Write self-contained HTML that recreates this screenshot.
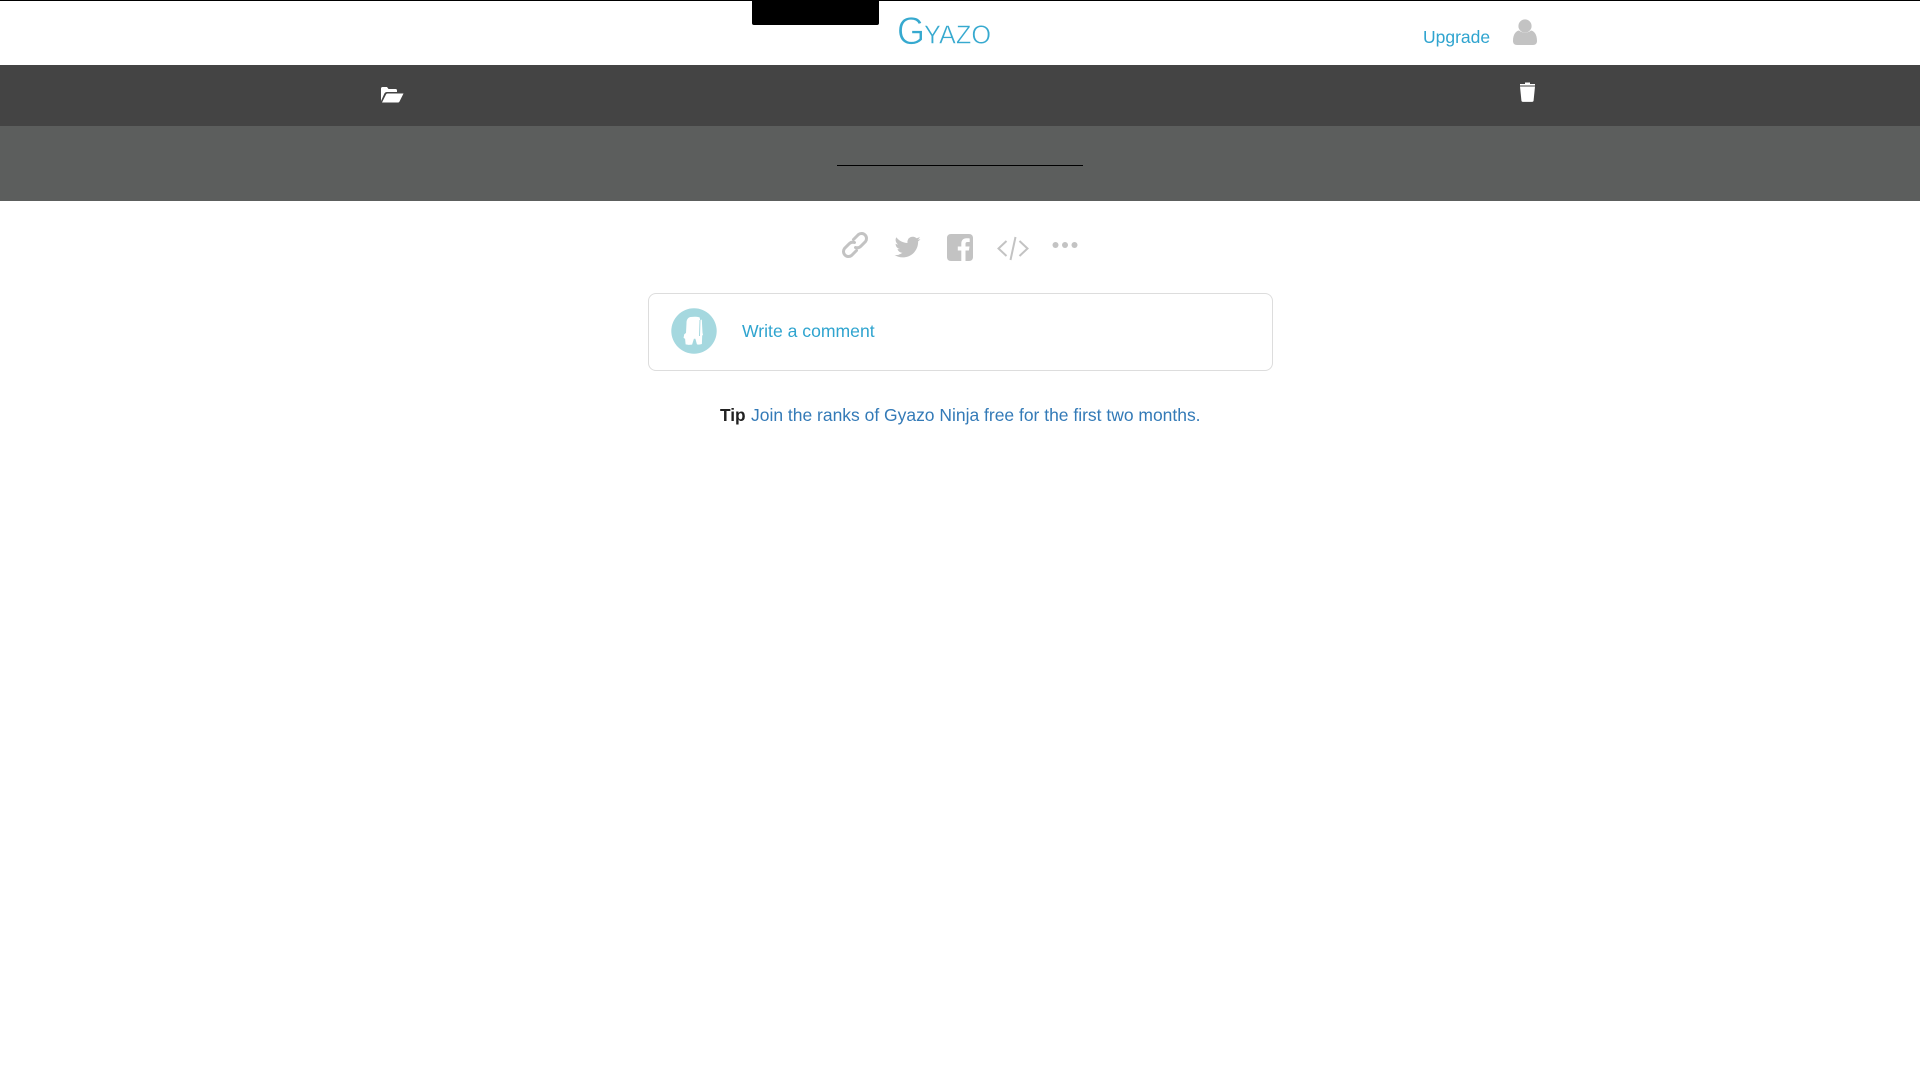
<!DOCTYPE html>
<html lang="en">
<head>
<meta charset="utf-8">
<title>Gyazo</title>
<style>
html,body{margin:0;padding:0;background:#fff;width:1920px;height:1080px;overflow:hidden;font-family:"Liberation Sans",Arial,sans-serif}
.a{position:absolute}
svg{position:absolute;display:block;overflow:visible}
</style>
</head>
<body>
<div class="a" style="left:0;top:0;width:1920px;height:1px;background:#000"></div>
<div class="a" style="left:752px;top:0;width:127px;height:24.5px;background:#000;border-radius:0 0 2px 2px"></div>
<svg style="left:0;top:0" width="1920" height="65">
<text x="897" y="44" font-family="Liberation Sans" font-size="39" fill="#36a9cf" stroke="#fff" stroke-width=".7" textLength="28" lengthAdjust="spacingAndGlyphs">G</text>
<text x="924" y="43.500" font-family="Liberation Sans" font-size="26" fill="#36a9cf" stroke="#fff" stroke-width=".5" textLength="67" lengthAdjust="spacingAndGlyphs">YAZO</text>
</svg>
<div class="a" style="left:1423px;top:26px;font-size:17.5px;line-height:22px;color:#2fa4cf">Upgrade</div>
<svg style="left:1513px;top:19px" width="24" height="26" viewBox="0 0 24 26"><circle cx="12" cy="7" r="6.6" fill="#c3c3c3"/><path d="M0 22c0-7 3-10 6-10.500 2 1.500 4 2.200 6 2.200s4-.7 6-2.200c3 .5 6 3.500 6 10.500 0 2.500-1.500 4-4 4H4c-2.500 0-4-1.500-4-4z" fill="#c3c3c3"/></svg>

<div class="a" style="left:0;top:65px;width:1920px;height:61px;background:#444"></div>
<div class="a" style="left:0;top:126px;width:1920px;height:75px;background:#5c5e5d"></div>
<svg style="left:381px;top:86px" width="23" height="17" viewBox="0 0 23 17"><path d="M0 15V2.500C0 1.500.7 1 1.500 1h4.500l1.500 2h7c1 0 1.500.6 1.500 1.500V6H6c-1.200 0-2 .5-2.600 1.500z" fill="#fff"/><path d="M1 16.500 5 8.500c.3-.6.8-1 1.500-1H22.500L18.500 15.500c-.4.7-.9 1-1.600 1z" fill="#fff"/></svg>
<svg style="left:1519px;top:81px" width="17" height="21" viewBox="0 0 17 21"><path d="M1 3h5V1.500h5V3h5V4.500H1z" fill="#fff"/><path d="M1 5.500h15l-1.400 14c-.1.9-.6 1.400-1.500 1.400H3.900c-.9 0-1.400-.5-1.500-1.400z" fill="#fff"/></svg>
<div class="a" style="left:837px;top:165px;width:246px;height:1px;background:#000"></div>

<svg style="left:842px;top:232px" width="26" height="26" viewBox="0 0 26 26" fill="none" stroke="#c3c3c3" stroke-width="3" stroke-linecap="round"><path d="M11.500 7.500 16.500 2.500A5 5 0 0 1 23.500 9.500L18.500 14.500A5 5 0 0 1 13.500 15.500"/><path d="M14.500 18.500 9.500 23.500A5 5 0 0 1 2.500 16.500L7.500 11.500A5 5 0 0 1 12.500 10.500"/></svg>
<svg style="left:894px;top:236px" width="27" height="23" viewBox="0 0 27 23"><path d="M26.500 3c-1 .5-2 .7-3 .9 1.100-.7 1.900-1.700 2.300-2.900-1 .6-2.200 1-3.300 1.300A5.300 5.300 0 0 0 13.500 7C9 6.800 5 4.700 2.300 1.200c-1.400 2.500-.7 5.600 1.700 7.200-.9 0-1.700-.3-2.400-.7 0 2.600 1.800 4.800 4.300 5.300-.8.200-1.600.2-2.400.1.700 2.100 2.700 3.600 5 3.700A10.800 10.800 0 0 1 .5 19c2.400 1.500 5.200 2.400 8.200 2.400 10 0 15.700-8.400 15.400-16 1-.7 1.800-1.500 2.400-2.400z" fill="#c3c3c3"/></svg>
<svg style="left:947px;top:234px" width="26" height="27" viewBox="0 0 26 27"><path d="M4 0h18c2.500 0 4 1.500 4 4v19c0 2.500-1.500 4-4 4h-3.500V16.500h3.400l.6-4h-4V10c0-1.200.4-2 2-2h2.200V4.500c-.4 0-1.700-.2-3.200-.2-3.100 0-5.200 1.900-5.200 5.300v2.900H10.800v4h3.500V27H4c-2.500 0-4-1.500-4-4V4c0-2.500 1.500-4 4-4z" fill="#c3c3c3"/></svg>
<svg style="left:997px;top:236px" width="32" height="24" viewBox="0 0 32 24" fill="none" stroke="#c3c3c3" stroke-width="2"><path d="M9.500 5 1.500 12.500 9.500 20"/><path d="M22.500 5 30.500 12.500 22.500 20"/><path d="M18.500 1 13.500 24"/></svg>
<svg style="left:1052px;top:241px" width="26" height="8" viewBox="0 0 26 8" fill="#c3c3c3"><circle cx="3.500" cy="4" r="3"/><circle cx="13" cy="4" r="3"/><circle cx="22.500" cy="4" r="3"/></svg>

<div class="a" style="left:648px;top:293px;width:623px;height:76px;border:1px solid #ddd;border-radius:8px;background:#fff"></div>
<svg style="left:670.500px;top:308px" width="46" height="46" viewBox="0 0 46 46"><circle cx="23" cy="23" r="22.700" fill="#a5d8df"/><path d="M15.500 15c0-3.500 1.500-5.500 4-6 3-.5 7-.4 9 .3l.8 3 1.500-.8.700 13 .5 2.500-.8.500-.3 8.500-2 .5-2 .1-1-.3-1.500-5.500-1.500 0-1.800 5.800-3.500.3-3-.5-.5-5.500-1.500-1 .6-3.500 1.800-1.500z" fill="#fff"/><path d="M29 12 28.500 28" stroke="#a5d8df" stroke-width="1"/></svg>
<div class="a" style="left:742px;top:320px;font-size:17.600px;line-height:22px;color:#2fa4cf">Write a comment</div>

<div class="a" style="left:720px;top:404px;font-size:17.300px;line-height:22px;color:#333;white-space:nowrap"><b style="color:#222">Tip</b></div>
<div class="a" style="left:751px;top:404px;font-size:17.480px;line-height:22px;color:#337ab7;white-space:nowrap">Join the ranks of Gyazo Ninja free for the first two months.</div>
</body>
</html>
